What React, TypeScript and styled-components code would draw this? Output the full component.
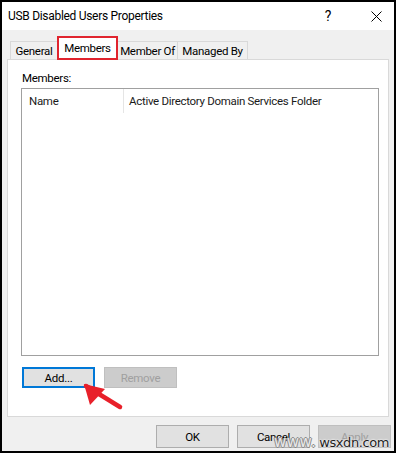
import React from 'react';
import styled, { createGlobalStyle } from 'styled-components';

const GlobalStyle = createGlobalStyle`
  html, body {
    margin: 0;
    padding: 0;
    background: #fff;
  }
  body {
    font-family: Roboto, "Liberation Sans", sans-serif;
    font-size: 11.5px;
    letter-spacing: -0.3px;
    color: #000;
  }
`;

const StyledWindow = styled.div`
  position: relative;
  box-sizing: border-box;
  width: 396px;
  height: 453px;
  border: 2px solid #000;
  background: #f0f0f0;
  display: flex;
  flex-direction: column;
  overflow: hidden;
`;

const StyledTitleBar = styled.div`
  height: 28px;
  background: #fff;
  display: flex;
  align-items: center;
  padding-left: 6px;
`;

const StyledTitle = styled.div`
  flex: 1;
  font-size: 12px;
  color: #000;
`;

const StyledCaptionButton = styled.div<{ $gap?: number }>`
  width: 36px;
  height: 28px;
  display: flex;
  align-items: center;
  justify-content: center;
  margin-right: ${(p) => p.$gap ?? 0}px;
  font-size: 14px;
  color: #000;
`;

const StyledBody = styled.div`
  flex: 1;
  display: flex;
  flex-direction: column;
  padding: 6px 5px 0 5px;
`;

const StyledTabRow = styled.div`
  display: flex;
  align-items: flex-end;
  height: 23px;
  padding-left: 3px;
  position: relative;
  z-index: 1;
`;

const StyledTab = styled.div<{ $w: number; $active?: boolean }>`
  box-sizing: border-box;
  width: ${(p) => p.$w}px;
  height: ${(p) => (p.$active ? 24 : 18)}px;
  margin-bottom: ${(p) => (p.$active ? -1 : 0)}px;
  margin-left: -1px;
  display: flex;
  align-items: center;
  justify-content: center;
  padding-top: ${(p) => (p.$active ? 0 : 1)}px;
  background: ${(p) => (p.$active ? '#fff' : '#f0f0f0')};
  border: ${(p) => (p.$active ? '2px solid #e0242e' : '1px solid #d9d9d9')};
  border-bottom: ${(p) => (p.$active ? '2px solid #e0242e' : 'none')};
  position: relative;
  z-index: ${(p) => (p.$active ? 2 : 1)};
  &:first-child {
    margin-left: 0;
  }
`;

const StyledPanel = styled.div`
  box-sizing: border-box;
  height: 358px;
  background: #fff;
  border: 1px solid #d9d9d9;
  display: flex;
  flex-direction: column;
  padding: 11px 9px 0 13px;
`;

const StyledLabel = styled.div`
  line-height: 15px;
  margin: 0 0 2px 1px;
`;

const StyledListBox = styled.div`
  box-sizing: border-box;
  width: 358px;
  height: 268px;
  border: 1px solid #a0a0a0;
  background: #fff;
`;

const StyledHeader = styled.div`
  display: flex;
  height: 24px;
`;

const StyledColumn = styled.div<{ $w?: number; $pad: number; $divider?: boolean }>`
  ${(p) => (p.$w ? `width: ${p.$w}px;` : 'flex: 1;')}
  box-sizing: border-box;
  display: flex;
  align-items: center;
  padding-left: ${(p) => p.$pad}px;
  border-right: ${(p) => (p.$divider ? '1px solid #e5e5e5' : 'none')};
  color: #1a1a1a;
`;

const StyledButtonRow = styled.div<{ $gap: number }>`
  display: flex;
  gap: ${(p) => p.$gap}px;
`;

const StyledPanelButtons = styled(StyledButtonRow)`
  margin: 11px 0 0 1px;
`;

const StyledButton = styled.div<{ $h: number; $focused?: boolean; $disabled?: boolean }>`
  box-sizing: border-box;
  width: 73px;
  height: ${(p) => p.$h}px;
  display: flex;
  align-items: center;
  justify-content: center;
  background: ${(p) => (p.$disabled ? '#cccccc' : '#e1e1e1')};
  border: ${(p) =>
    p.$focused ? '2px solid #0078d7' : `1px solid ${p.$disabled ? '#bfbfbf' : '#adadad'}`};
  color: ${(p) => (p.$disabled ? '#a0a0a0' : '#000')};
`;

const StyledFooter = styled(StyledButtonRow)`
  justify-content: flex-end;
  margin: 8px -2px 0 0;
`;

const StyledArrow = styled.svg`
  position: absolute;
  left: 78px;
  top: 378px;
  z-index: 5;
`;

const StyledWatermark = styled.div`
  position: absolute;
  left: 272px;
  top: 431px;
  z-index: 5;
  font-family: "DejaVu Sans", sans-serif;
  letter-spacing: -0.4px;
  white-space: nowrap;
  display: flex;
  align-items: baseline;
`;

const StyledMarkFaint = styled.span`
  font-size: 15px;
  letter-spacing: 0.5px;
  color: #e8e8e8;
  text-shadow: 1px 0 0 #8a8a8a, -1px 0 0 #8a8a8a, 0 1px 0 #8a8a8a, 0 -1px 0 #8a8a8a;
`;

const StyledMarkStrong = styled.span`
  font-size: 13px;
  margin-left: 3px;
  color: #1e1e1e;
  text-shadow: 0 0 2px #fff, 0 0 2px #fff;
`;

const CloseIcon = () => (
  <svg width="11" height="11" viewBox="0 0 11 11">
    <path d="M0.5 0.5 L10.5 10.5 M10.5 0.5 L0.5 10.5" stroke="#000" strokeWidth="1" fill="none" />
  </svg>
);

const Arrow = () => (
  <StyledArrow width="44" height="32" viewBox="0 0 44 32">
    <path d="M6 6 L40 27" stroke="#e8202a" strokeWidth="4.5" strokeLinecap="round" fill="none" />
    <polygon points="4,4 25,9 10,25" fill="#e8202a" />
  </StyledArrow>
);

export default () => {
  return (
    <>
      <GlobalStyle />
      <StyledWindow>
        <StyledTitleBar>
          <StyledTitle>USB Disabled Users Properties</StyledTitle>
          <StyledCaptionButton $gap={12}>?</StyledCaptionButton>
          <StyledCaptionButton>
            <CloseIcon />
          </StyledCaptionButton>
        </StyledTitleBar>
        <StyledBody>
          <StyledTabRow>
            <StyledTab $w={48}>General</StyledTab>
            <StyledTab $w={61} $active>
              Members
            </StyledTab>
            <StyledTab $w={61}>Member Of</StyledTab>
            <StyledTab $w={71}>Managed By</StyledTab>
          </StyledTabRow>
          <StyledPanel>
            <StyledLabel>Members:</StyledLabel>
            <StyledListBox>
              <StyledHeader>
                <StyledColumn $w={102} $pad={7} $divider>
                  Name
                </StyledColumn>
                <StyledColumn $pad={5}>Active Directory Domain Services Folder</StyledColumn>
              </StyledHeader>
            </StyledListBox>
            <StyledPanelButtons $gap={9}>
              <StyledButton $h={21} $focused>
                Add...
              </StyledButton>
              <StyledButton $h={21} $disabled>
                Remove
              </StyledButton>
            </StyledPanelButtons>
          </StyledPanel>
          <StyledFooter $gap={8}>
            <StyledButton $h={23}>OK</StyledButton>
            <StyledButton $h={23}>Cancel</StyledButton>
            <StyledButton $h={23} $disabled>
              Apply
            </StyledButton>
          </StyledFooter>
        </StyledBody>
        <Arrow />
        <StyledWatermark>
          <StyledMarkFaint>www.</StyledMarkFaint>
          <StyledMarkStrong>wsxdn.com</StyledMarkStrong>
        </StyledWatermark>
      </StyledWindow>
    </>
  );
};
